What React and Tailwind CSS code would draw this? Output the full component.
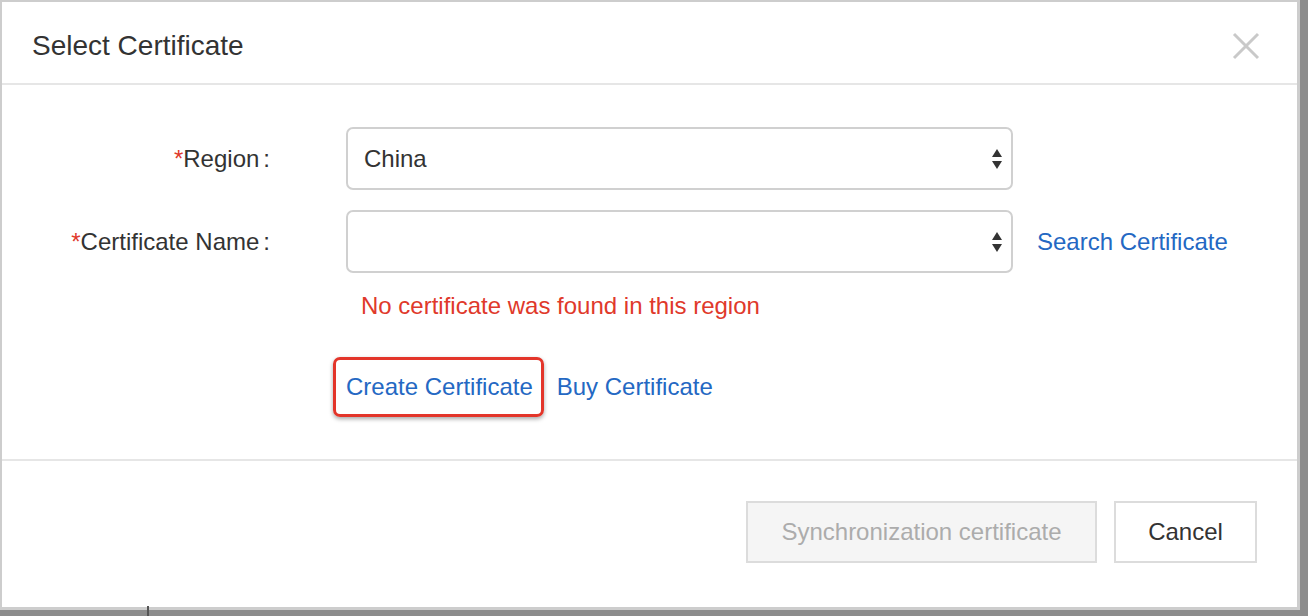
import React from "react";

function Arrows() {
  return (
    <svg width="12" height="22" viewBox="0 0 12 22" className="shrink-0">
      <path d="M6 1 L11 9 L1 9 Z" fill="#333" />
      <path d="M1 13 L11 13 L6 21 Z" fill="#333" />
    </svg>
  );
}

function Select({ value }) {
  return (
    <div className="w-[667px] h-[63px] rounded-[7px] border-2 border-[#d0d0d0] bg-white flex items-center pl-[16px] pr-[8px] justify-between">
      <span className="text-[24px] text-[#333]">{value}</span>
      <Arrows />
    </div>
  );
}

function Label({ children }) {
  return (
    <div className="text-[24px] text-[#333] text-right whitespace-nowrap">
      <span className="text-[#e0392b]">*</span>
      {children}
      <span className="ml-[4px]">:</span>
    </div>
  );
}

export default function App() {
  return (
    <div
      className="w-[1308px] h-[616px] bg-[#8c8c8c] relative overflow-hidden"
      style={{ fontFamily: '"Liberation Sans", Arial, sans-serif' }}
    >
      <div className="absolute left-[147px] top-[606px] w-[2px] h-[10px] bg-[#555]" />
      <div className="w-[1300px] h-[610px] bg-white border-l-2 border-t-2 border-r-[3px] border-b-[3px] border-[#cdcdcd] flex flex-col">
        <div className="h-[83px] flex items-center justify-between pl-[30px] pr-[37px] pt-[6px] border-b-2 border-[#e6e6e6] shrink-0">
          <h1 className="text-[28px] text-[#333]">Select Certificate</h1>
          <svg width="28" height="28" viewBox="0 0 28 28">
            <path d="M2 2 L26 26 M26 2 L2 26" stroke="#c9c9c9" strokeWidth="3" />
          </svg>
        </div>
        <div className="flex-1 border-b-2 border-[#e6e6e6] pt-[42px]">
          <div className="grid grid-cols-[268px_auto_auto] gap-x-[76px] gap-y-[20px] items-center justify-start">
            <Label>Region</Label>
            <div className="col-span-2">
              <Select value="China" />
            </div>
            <Label>Certificate Name</Label>
            <div className="flex items-center">
              <Select value="" />
              <a className="ml-[24px] text-[24px] text-[#2468c3] whitespace-nowrap">Search Certificate</a>
            </div>
          </div>
          <div className="ml-[359px] mt-[19px] text-[24px] text-[#e0392b] leading-[28px]">
            No certificate was found in this region
          </div>
          <div className="ml-[331px] mt-[37px] flex items-center">
            <div className="rounded-[7px] border-[3px] border-[#e3352a] pl-[10px] pr-[8px] h-[60px] flex items-center shadow-[0_2px_4px_rgba(0,0,0,0.35)]">
              <a className="text-[24px] text-[#2468c3] whitespace-nowrap">Create Certificate</a>
            </div>
            <a className="ml-[13px] text-[24px] text-[#2468c3] whitespace-nowrap">Buy Certificate</a>
          </div>
        </div>
        <div className="h-[146px] shrink-0 flex justify-end items-start pt-[40px] pr-[40px] gap-[17px]">
          <button className="w-[351px] h-[62px] border-2 border-[#dcdcdc] bg-[#f5f5f5] text-[24px] text-[#acacac]">
            Synchronization certificate
          </button>
          <button className="w-[143px] h-[62px] border-2 border-[#dcdcdc] bg-white text-[24px] text-[#333]">
            Cancel
          </button>
        </div>
      </div>
    </div>
  );
}
